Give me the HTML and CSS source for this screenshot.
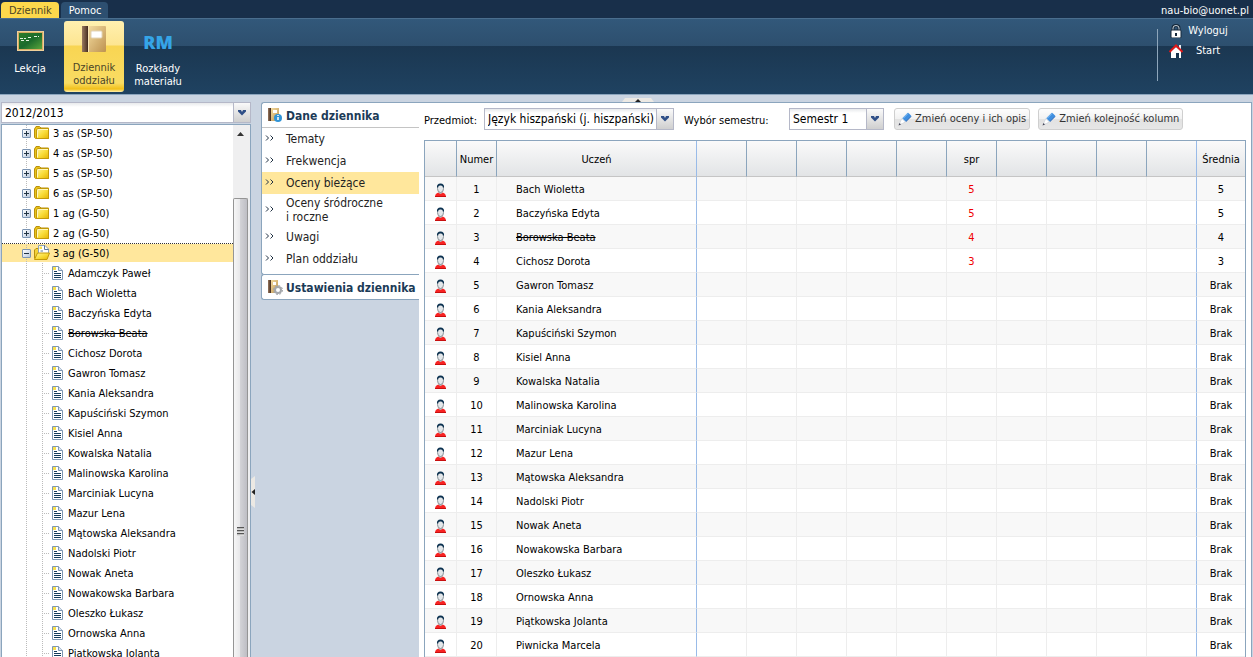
FILE: index.html
```html
<!DOCTYPE html>
<html lang="pl">
<head>
<meta charset="utf-8">
<title>Dziennik oddziału</title>
<link rel="stylesheet" href="styles.css">
</head>
<body>
<svg class="sprite" aria-hidden="true">
  <defs>
    <linearGradient id="gold" x1="0" y1="0" x2="1" y2="1"><stop offset="0" stop-color="#fff3a0"/><stop offset="0.5" stop-color="#f9de3c"/><stop offset="1" stop-color="#e6b400"/></linearGradient>
    <linearGradient id="green" x1="0" y1="0" x2="1" y2="1"><stop offset="0" stop-color="#2e7d2a"/><stop offset="0.5" stop-color="#1b6b2c"/><stop offset="1" stop-color="#5aa53c"/></linearGradient>
    <linearGradient id="cover" x1="0" y1="0" x2="1" y2="1"><stop offset="0" stop-color="#f4dca0"/><stop offset="1" stop-color="#bd9250"/></linearGradient>
    <linearGradient id="spine" x1="0" y1="0" x2="1" y2="0"><stop offset="0" stop-color="#9a7a60"/><stop offset="1" stop-color="#3c2418"/></linearGradient>
  </defs>
  <symbol id="folder" viewBox="0 0 16 16">
    <path d="M.5 4 2 1.500H5.500L7 3H14.500V13.500H1.500L.5 12.500Z" fill="#e9c21a" stroke="#b8900c"/>
    <path d="M2.500 13V5L3.500 3.500H14.500V13.500H2.500Z" fill="url(#gold)" stroke="#c39a08"/>
    <path d="M3.500 12.500V5.500L4 4.500H14" fill="none" stroke="#fff8c0"/>
  </symbol>
  <symbol id="folder-open" viewBox="0 0 16 16">
    <path d="M.5 13.500V5L2 3.500H4.500V8H14.500V11" fill="#f3d23a" stroke="#b8900c"/>
    <path d="M4.500 9V.5H11L14.500 4V9Z" fill="#fff" stroke="#8fa3ba"/>
    <path d="M5.500 1.500H8V4H5.500Z" fill="#f7e04e"/>
    <path d="M10.500.500V4.500H14.500M6.500 6H9" fill="none" stroke="#5a7896"/>
    <path d="M.5 14.500 3.500 8H15.500L13 14.500Z" fill="url(#gold)" stroke="#c39a08"/>
  </symbol>
  <symbol id="doc" viewBox="0 0 14 16">
    <path d="M2.500 1.500H8.500L12.500 5.500V14.500H2.500Z" fill="#fff" stroke="#7d97b3"/>
    <path d="M3 2H6V5H3Z" fill="#f7e04e"/>
    <path d="M8.500 1.500V5.500H12.500" fill="#dbe5ef" stroke="#7d97b3"/>
    <path d="M4 6.500H7M4 8.500H11M4 10.500H11M4 12.500H11" stroke="#123a5c"/>
  </symbol>
  <symbol id="pupil" viewBox="0 0 13 14">
    <path d="M1 14C1 11 3 10 4.500 9.500H8.500C10 10 12 11 12 14Z" fill="#f82222"/>
    <path d="M1 13.500H12" stroke="#c80f0f"/>
    <path d="M4.500 8H8.500V10L6.500 11 4.500 10Z" fill="#b9bdc0"/>
    <ellipse cx="6.500" cy="5.500" rx="3" ry="4" fill="#e3e7ea" stroke="#8a9298"/>
    <path d="M3 5C2.500 2 4 .5 6.500.500S10.500 2 10 5L9 4C8.500 3 8 2.500 6.500 2.500S4.500 3 4 4Z" fill="#0b3150"/>
  </symbol>
  <symbol id="book" viewBox="0 0 26 28">
    <path d="M1 1H8V27H1Z" fill="url(#spine)"/>
    <path d="M7 1H24Q25 1 25 2V26Q25 27 24 27H7Z" fill="url(#cover)"/>
    <path d="M6.500 1V27" stroke="#4a3020"/>
    <path d="M7.500 1V27" stroke="#fae6b8"/>
    <rect x="10" y="6" width="11" height="7" rx="1" fill="#fff" stroke="#e2d4b8"/>
  </symbol>
  <symbol id="pencil" viewBox="0 0 14 14">
    <path d="M4 6.500 9.500 1Q10 .500 10.500 1L13 3.500Q13.500 4 13 4.500L7.500 10Z" fill="#3f8fe0"/>
    <path d="M5 6.500 10 1.500" stroke="#8cc4f5"/>
    <path d="M7.500 10 13 4.500" stroke="#2864b4"/>
    <path d="M4 6.500 7.500 10 4.500 11.500 1 13 2.500 9Z" fill="#fff" stroke="#d5d9de"/>
    <path d="M.500 13.500 1.500 11 3 12.500Z" fill="#445"/>
  </symbol>
  <symbol id="chevron" viewBox="0 0 10 6"><path d="M1 0H4L5 2 6 0H9V1.500L5 5.500 1 1.500Z" fill="#2f4f87"/></symbol>
  <symbol id="arrows" viewBox="0 0 9 6"><path d="M1 0.500 3.500 3 1 5.500M5.500 0.500 8 3 5.500 5.500" fill="none" stroke="#234" stroke-width="1"/></symbol>
</svg>

<header class="top">
  <nav class="tabs">
    <a class="tab tab-active" href="#">Dziennik</a>
    <a class="tab" href="#">Pomoc</a>
    <span class="user">nau-bio@uonet.pl</span>
  </nav>
  <div class="ribbon">
    <button class="tool" type="button">
      <svg class="tool-icon" viewBox="0 0 28 28"><rect x="1" y="5" width="27" height="20" fill="#d8ac62"/><rect x="1.500" y="5.500" width="26" height="19" fill="none" stroke="#efd09a"/><rect x="3" y="7" width="23" height="16" fill="url(#green)"/><path d="M4 12.500H10M12 11.500H16M18 10.500H23M5 14.500H8M10 14.500H14" stroke="#e4f4e0" stroke-dasharray="3 1"/></svg>
      <span>Lekcja</span>
    </button>
    <button class="tool tool-active" type="button">
      <svg class="tool-icon"><use href="#book"/></svg>
      <span>Dziennik oddziału</span>
    </button>
    <button class="tool" type="button">
      <span class="tool-icon rm" aria-hidden="true">RM</span>
      <span>Rozkłady materiału</span>
    </button>
    <div class="session">
      <a href="#"><svg class="session-icon" viewBox="0 0 14 14"><path d="M4 7V4Q4 1.500 7 1.500T10 4V7" fill="none" stroke="#16283a" stroke-width="3"/><path d="M4 7V4Q4 1.500 7 1.500T10 4V7" fill="none" stroke="#c9d2da"/><rect x="2" y="6" width="10" height="8" rx="1" fill="#fff" stroke="#16283a"/><path d="M6 9H8V12H6Z" fill="#16283a"/></svg><span>Wyloguj</span></a>
      <a href="#"><svg class="session-icon" viewBox="0 0 14 14"><path d="M2 7 7 3 12 7V14H2Z" fill="#fff"/><path d="M7 9H10V14H7Z" fill="#16324c"/><path d="M10 1H12V5H10Z" fill="#e8edf2"/><path d="M0.500 8 7 1.500 13.500 8" fill="none" stroke="#e01818" stroke-width="2"/></svg><span>Start</span></a>
    </div>
  </div>
</header>

<main class="workspace">
  <aside class="sidebar">
    <div class="combo combo-year">
      <select aria-label="Rok szkolny"><option>2012/2013</option></select>
      <span class="combo-arrow"><svg><use href="#chevron"/></svg></span>
    </div>
    <div class="tree-box">
      <ul class="tree" id="tree"></ul>
      <div class="scrollbar" aria-hidden="true">
        <svg class="scroll-up" viewBox="0 0 7 4"><path d="M0 4 3.500 0 7 4Z" fill="#333"/></svg>
        <div class="scroll-thumb"><span class="grip"></span></div>
      </div>
    </div>
  </aside>

  <button class="splitter splitter-left" type="button" aria-label="Zwiń panel"><svg viewBox="0 0 4 32"><path d="M4 0V32L0 29V3Z" fill="#ece9e4"/><path d="M4 13V19L0.500 16Z" fill="#222"/></svg></button>

  <section class="content">
    <button class="splitter splitter-top" type="button" aria-label="Zwiń nagłówek"><svg viewBox="0 0 32 4"><path d="M0 4H32L29 0H3Z" fill="#ece9e4"/><path d="M13 4H19L16 1Z" fill="#222"/></svg></button>
    <nav class="menu">
      <div class="menu-group">
        <h2 class="menu-title"><svg viewBox="0 0 16 16"><path d="M1 1H4V14H1Z" fill="url(#spine)"/><path d="M4 1H12V14H4Z" fill="url(#cover)"/><path d="M6 3H10V6H6Z" fill="#fff"/><circle cx="11" cy="11" r="4" fill="#2f93d6"/><path d="M11 8V9M11 10V13" stroke="#fff" stroke-width="1.500"/></svg><span>Dane dziennika</span></h2>
        <ul class="menu-list">
          <li><a href="#"><svg><use href="#arrows"/></svg>Tematy</a></li>
          <li><a href="#"><svg><use href="#arrows"/></svg>Frekwencja</a></li>
          <li><a class="current" href="#"><svg><use href="#arrows"/></svg>Oceny bieżące</a></li>
          <li><a class="tall" href="#"><svg><use href="#arrows"/></svg><span>Oceny śródroczne<br>i roczne</span></a></li>
          <li><a href="#"><svg><use href="#arrows"/></svg>Uwagi</a></li>
          <li><a href="#"><svg><use href="#arrows"/></svg>Plan oddziału</a></li>
        </ul>
      </div>
      <div class="menu-group">
        <h2 class="menu-title"><svg viewBox="0 0 16 16"><path d="M1 1H4V14H1Z" fill="url(#spine)"/><path d="M4 1H11V14H4Z" fill="url(#cover)"/><path d="M6 3H9V6H6Z" fill="#fff"/><circle cx="11" cy="11" r="3" fill="#fff" stroke="#a4a7ab" stroke-width="2"/><circle cx="11" cy="11" r="4.500" fill="none" stroke="#a4a7ab" stroke-dasharray="2 1.500"/></svg><span>Ustawienia dziennika</span></h2>
      </div>
    </nav>
    <div class="journal">
      <div class="filters">
        <label for="subject">Przedmiot:</label>
        <div class="combo combo-subject">
          <select id="subject"><option>Język hiszpański (j. hiszpański)</option></select>
          <span class="combo-arrow"><svg><use href="#chevron"/></svg></span>
        </div>
        <label class="term-label" for="term">Wybór semestru:</label>
        <div class="combo combo-term">
          <select id="term"><option>Semestr 1</option></select>
          <span class="combo-arrow"><svg><use href="#chevron"/></svg></span>
        </div>
        <button class="action" type="button"><svg><use href="#pencil"/></svg>Zmień oceny i ich opis</button>
        <button class="action" type="button"><svg><use href="#pencil"/></svg>Zmień kolejność kolumn</button>
      </div>
      <table class="grades">
        <thead>
          <tr>
            <th class="col-icon"></th><th class="col-number">Numer</th><th class="col-name">Uczeń</th>
            <th></th><th></th><th></th><th></th><th></th><th>spr</th><th></th><th></th><th></th><th class="last-grade"></th>
            <th class="col-average">Średnia</th>
          </tr>
        </thead>
        <tbody id="grades"></tbody>
      </table>
    </div>
  </section>
</main>
<script src="app.js"></script>
</body>
</html>
```

FILE: styles.css
```css
* { box-sizing: border-box; }

body {
  display: flex;
  flex-direction: column;
  height: 100vh;
  margin: 0;
  overflow: hidden;
  background: #cad4e1;
  color: #000;
  font: 11px/14px "DejaVu Sans Condensed", "Noto Sans", sans-serif;
}

button, select { font: inherit; color: inherit; }
a { color: inherit; text-decoration: none; }
ul { list-style: none; margin: 0; padding: 0; }
.sprite { position: absolute; width: 0; height: 0; }

/* Header */
.top { color: #fff; border-bottom: 1px solid #8ba5bd; flex: none; }
.tabs { display: flex; align-items: flex-end; gap: 2px; height: 18px; padding-left: 1px; background: #182f4a; }
.tab { height: 16px; padding: 2px 7px 0 8px; border-radius: 4px 4px 0 0; background: #2d4f70; }
.tab-active { background: #fdd84c; color: #4b4426; }
.user { margin-left: auto; padding-right: 4px; }

.ribbon {
  display: flex;
  gap: 4px;
  height: 76px;
  padding: 2px 0;
  border-top: 1px solid #4a6e8e;
  background: linear-gradient(#32587a 0, #2d4f6e 27px, #1b3751 27px, #1f4261 100%);
}
.tool {
  display: flex;
  flex-direction: column;
  align-items: center;
  width: 60px;
  height: 71px;
  padding: 4px 0 0;
  border: 0;
  border-radius: 3px;
  background: none;
  line-height: 13px;
}
.tool span { text-align: center; }
.tool-icon { flex: none; width: 28px; height: 28px; margin: 1px 0 8px; }
.tool-active {
  background: linear-gradient(#fff0b0 0, #fde591 24px, #f8d552 25px, #f9dc63 62px, #f1c01a 68px, #fff0b0 100%);
  color: #4b4426;
}
.tool-active .tool-icon { width: 26px; margin: 0 0 8px; }
.tool .rm { width: auto; color: #35a5e8; font: 800 18px/32px "Open Sans", sans-serif; }

.session { padding: 0 20px 0 12px; background: linear-gradient(#8ea6bb, #8ea6bb) 0 8px / 1px 52px no-repeat; margin-left: auto; }
.session a { display: flex; align-items: center; height: 20px; }
.session-icon { width: 14px; height: 14px; }
.session span { width: 50px; text-align: center; }

/* Workspace */
.workspace { display: flex; flex: 1; min-height: 0; padding: 7px 1px 0; }
.sidebar { display: flex; flex-direction: column; gap: 1px; width: 250px; flex: none; }

.combo { position: relative; height: 22px; }
.combo select {
  appearance: none;
  width: 100%;
  height: 100%;
  padding: 0 18px 0 3px;
  border: 1px solid #b5b8c8;
  border-radius: 0;
  background: linear-gradient(#e8eaec, #fff 4px);
  font-size: 12px;
}
.combo-arrow {
  position: absolute;
  inset: 1px 1px 1px auto;
  display: grid;
  place-items: center;
  width: 17px;
  border-left: 1px solid #b5b8c8;
  background: linear-gradient(#fafafa, #e4e4e4 50%, #cfcfcf);
  pointer-events: none;
}
.combo-arrow svg { width: 10px; height: 6px; }
.combo-year { height: 21px; }

.tree-box { display: flex; flex: 1; min-height: 0; border: 1px solid #8ba5bd; border-bottom: 0; background: #fff; overflow: hidden; }
.tree { flex: 1; margin-top: -2px; }
.tree li { display: flex; align-items: center; height: 20px; padding-left: 16px; white-space: nowrap; }
.tree li > :last-child { margin-top: 2px; }
.tree svg { width: 16px; height: 16px; margin-right: 3px; }
.tree .pupil svg { width: 14px; margin-right: 4px; }
.tree .open {
  background:
    linear-gradient(90deg, #333 50%, transparent 50%) 0 0 / 2px 1px repeat-x,
    linear-gradient(#ffe79c, #ffe79c) 0 1px / 100% 18px no-repeat;
}
.guide { display: grid; place-items: center; width: 16px; height: 20px; background: linear-gradient(#bbb 50%, transparent 50%) 8px 0 / 1px 2px repeat-y; }
.branch {
  background:
    linear-gradient(#bbb 50%, transparent 50%) 8px 0 / 1px 2px repeat-y,
    linear-gradient(90deg, #bbb 50%, transparent 50%) 0 10px / 2px 1px repeat-x;
  clip-path: inset(0 0 0 8px);
}
.toggle {
  display: block;
  width: 9px;
  height: 9px;
  margin-left: 1px;
  padding: 0;
  border: 1px solid #7b94b3;
  border-radius: 1px;
  background:
    linear-gradient(#234, #234) center / 5px 1px no-repeat,
    linear-gradient(135deg, #fff, #b9c9de);
}
.plus {
  background:
    linear-gradient(#234, #234) center / 5px 1px no-repeat,
    linear-gradient(#234, #234) center / 1px 5px no-repeat,
    linear-gradient(135deg, #fff, #b9c9de);
}

.scrollbar { display: flex; flex-direction: column; width: 17px; padding-right: 2px; background: #efeff0; }
.scroll-up { width: 7px; height: 4px; margin: 7px 4px 62px; flex: none; }
.scroll-thumb {
  display: grid;
  align-items: end;
  justify-items: center;
  flex: 1;
  padding-bottom: 121px;
  border: 1px solid #959595;
  border-bottom: 0;
  border-radius: 2px 2px 0 0;
  background: linear-gradient(90deg, #f6f6f6, #e8e8ea 45%, #d2d2d6 50%, #bebec4);
}
.grip { width: 7px; height: 9px; background: repeating-linear-gradient(#555 0, #555 1px, #aaa 1px, #eee 3px); }

.splitter { display: block; padding: 0; border: 0; background: none; }
.splitter svg { display: block; width: 100%; height: 100%; }
.splitter-left { align-self: center; width: 4px; height: 32px; margin: 224px 6px 0 0; }
.splitter-top { position: absolute; top: -4px; left: 36.4%; width: 32px; height: 4px; }

/* Content */
.content { position: relative; display: flex; flex: 1; min-width: 0; }
.menu { width: 158px; flex: none; }
.menu-group { border: 1px solid #8ba5bd; border-right: 0; border-radius: 3px 0 0 3px; background: #fff; }
.menu-group + .menu-group { margin-top: -1px; }
.menu-title { display: flex; align-items: center; height: 24px; margin: 0; padding-left: 5px; color: #1c3b57; font-size: 12px; line-height: 14px; white-space: nowrap; }
.menu-title svg { width: 16px; height: 16px; margin-right: 3px; }
.menu-title span { padding-top: 2px; }
.menu-list { padding-bottom: 4px; border-top: 1px solid #c4c4c4; }
.menu-list a { display: flex; align-items: center; height: 22px; padding-left: 3px; color: #222; font-size: 12px; }
.menu-list svg { width: 9px; height: 6px; margin: 0 12px 2px 0; }
.menu-list .tall { height: 32px; }
.menu-list .current { background: #ffe79c; }

.journal { flex: 1; min-width: 0; padding: 5px 5px 0; border: 1px solid #8ba5bd; border-width: 1px 1px 0 0; background: #fff; overflow: hidden; }
.filters { display: flex; height: 32px; white-space: nowrap; }
.filters label { width: 60px; padding-top: 6px; }
.filters .term-label { width: 105px; margin-left: 10px; }
.filters .term-label + .combo { margin-right: 10px; }
.combo-subject { width: 190px; }
.combo-term { width: 95px; }
.action {
  display: flex;
  align-items: center;
  gap: 3px;
  height: 22px;
  margin-right: 8px;
  padding: 0 3px;
  border: 1px solid #cfcfcf;
  border-radius: 3px;
  background: linear-gradient(#fdfdfd, #f1f1f1 50%, #e2e2e2 50%, #e6e6e6);
  color: #333;
}
.action svg { width: 14px; height: 14px; }

.grades { width: 100%; table-layout: fixed; border-collapse: separate; border-spacing: 0; border: 1px solid #8ba5bd; border-bottom: 0; }
.grades th, .grades td { padding: 2px 0 0; text-align: center; font-weight: normal; border-right: 1px solid #ededed; }
.grades th { height: 36px; border-right-color: #8ba5bd; border-bottom: 1px solid #c5c5c5; background: linear-gradient(#fafafa, #e2e4e6); }
.grades td { height: 24px; border-bottom: 1px solid #ededed; }
.grades tbody tr:nth-child(odd) { background: #f8f8f8; }
.grades .col-icon { width: 32px; }
.grades .col-number { width: 40px; }
.grades .col-name { width: 200px; }
.grades .col-average { width: 48px; }
.grades td.col-name { padding-left: 19px; text-align: left; }
.grades .col-name, .grades .last-grade { border-right-color: #99bbe8; }
.grades .col-average { border-right: 0; }
.grades svg { display: block; width: 13px; height: 14px; margin: 0 auto; }
.grades .grade { color: #f00000; }
```

FILE: app.js
```js
const pupils = [
  "Bach Wioletta", "Baczyńska Edyta", "Borowska Beata", "Cichosz Dorota", "Gawron Tomasz",
  "Kania Aleksandra", "Kapuściński Szymon", "Kisiel Anna", "Kowalska Natalia", "Malinowska Karolina",
  "Marciniak Lucyna", "Mazur Lena", "Mątowska Aleksandra", "Nadolski Piotr", "Nowak Aneta",
  "Nowakowska Barbara", "Oleszko Łukasz", "Ornowska Anna", "Piątkowska Jolanta", "Piwnicka Marcela"
];
const removed = "Borowska Beata";
const tests = [5, 5, 4, 3];
const classes = ["3 as (SP-50)", "4 as (SP-50)", "5 as (SP-50)", "6 as (SP-50)", "1 ag (G-50)", "2 ag (G-50)"];

const icon = (id) => `<svg><use href="#${id}"/></svg>`;
const label = (name) => name === removed ? `<s>${name}</s>` : `<span>${name}</span>`;
const toggle = (cls, text) => `<span class="guide"><button class="toggle ${cls}" type="button" aria-label="${text}"></button></span>`;

document.getElementById("tree").innerHTML =
  classes.map((c) => `<li>${toggle("plus", "Rozwiń")}${icon("folder")}<span>${c}</span></li>`).join("") +
  `<li class="open">${toggle("", "Zwiń")}${icon("folder-open")}<span>3 ag (G-50)</span></li>` +
  ["Adamczyk Paweł", ...pupils.slice(0, 19)].map((p) =>
    `<li class="pupil"><span class="guide"></span><span class="guide branch"></span>${icon("doc")}${label(p)}</li>`).join("");

document.getElementById("grades").innerHTML = pupils.map((p, i) => {
  const cells = Array.from({ length: 10 }, (_, c) =>
    `<td class="${c === 5 ? "grade" : c === 9 ? "last-grade" : ""}">${c === 5 ? tests[i] ?? "" : ""}</td>`).join("");
  return `<tr><td>${icon("pupil")}</td><td>${i + 1}</td><td class="col-name">${label(p)}</td>${cells}<td class="col-average">${tests[i] ?? "Brak"}</td></tr>`;
}).join("");
```
